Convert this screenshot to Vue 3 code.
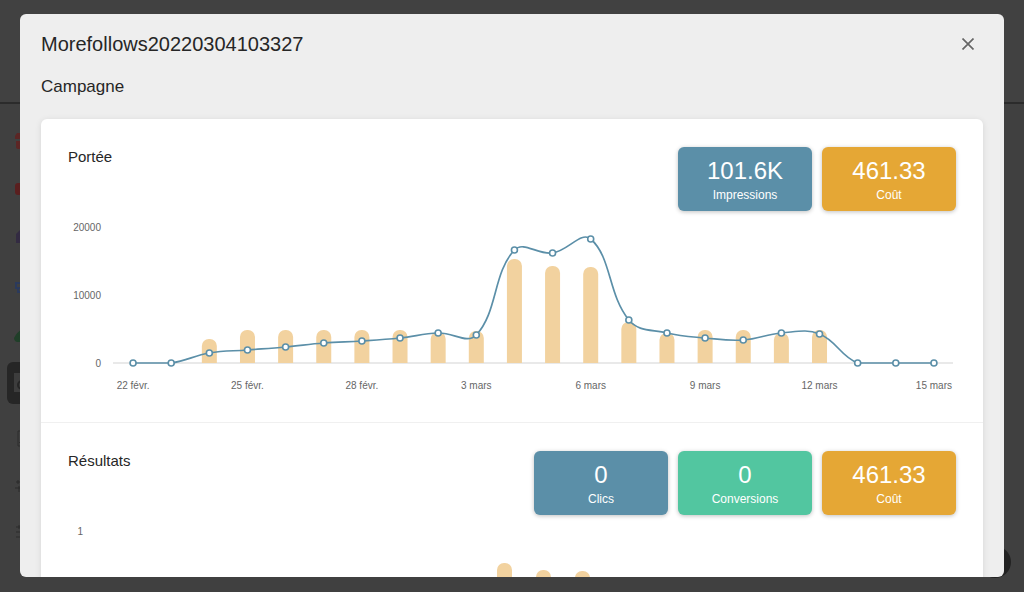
<script setup>
const BASELINE = 152
const TENSION = 0.4
const RIGHT = 885

const bars = [0, 0, 24, 33, 33, 33, 33, 33, 31, 32, 104, 97, 96, 41, 30, 33, 33, 30, 33, 0, 0, 0]
const impressions = [0, 0, 10, 13, 16, 20, 22, 25, 30, 28, 113, 110, 124, 43, 30, 25, 23, 30, 29, 0, 0, 0]
const dates = ['22 févr.', '25 févr.', '28 févr.', '3 mars', '6 mars', '9 mars', '12 mars', '15 mars']

function slots(left) {
  const step = (RIGHT - left) / bars.length
  return bars.map((_, i) => left + step * (i + 0.5))
}

function barPath(x, h) {
  const r = Math.min(7, h)
  return `M${x - 7.5} ${BASELINE}v${-(h - r)}a${r} ${r} 0 0 1 ${r} ${-r}h${15 - 2 * r}a${r} ${r} 0 0 1 ${r} ${r}v${h - r}z`
}

function makeBars(left) {
  const xs = slots(left)
  return bars.map((h, i) => ({ i, h, d: barPath(xs[i], h) })).filter((b) => b.h > 0)
}

function smooth(points) {
  const cap = (y) => Math.min(y, BASELINE)
  const ctrl = points.map((p, i) => {
    const a = points[i - 1] || p
    const b = points[i + 1] || p
    const da = Math.hypot(p.x - a.x, p.y - a.y)
    const db = Math.hypot(b.x - p.x, b.y - p.y)
    const fa = (TENSION * da) / (da + db)
    const fb = (TENSION * db) / (da + db)
    return {
      px: p.x - fa * (b.x - a.x),
      py: cap(p.y - fa * (b.y - a.y)),
      nx: p.x + fb * (b.x - a.x),
      ny: cap(p.y + fb * (b.y - a.y)),
    }
  })
  return points.reduce((d, p, i) => {
    if (i === 0) return `M${p.x} ${p.y}`
    const c = ctrl[i - 1]
    return `${d}C${c.nx} ${c.ny} ${ctrl[i].px} ${ctrl[i].py} ${p.x} ${p.y}`
  }, '')
}

const reachPoints = slots(46).map((x, i) => ({ x, y: BASELINE - impressions[i] }))

const sections = [
  {
    title: 'Portée',
    stats: [
      { value: '101.6K', label: 'Impressions', tone: 'blue' },
      { value: '461.33', label: 'Coût', tone: 'amber' },
    ],
    left: 46,
    tickX: 33,
    ticks: [{ text: '20000', y: 16 }, { text: '10000', y: 84 }, { text: '0', y: 152 }],
    bars: makeBars(46),
    points: reachPoints,
    line: smooth(reachPoints),
    dates: dates.map((text, i) => ({ text, x: reachPoints[i * 3].x })),
  },
  {
    title: 'Résultats',
    stats: [
      { value: '0', label: 'Clics', tone: 'blue' },
      { value: '0', label: 'Conversions', tone: 'green' },
      { value: '461.33', label: 'Coût', tone: 'amber' },
    ],
    left: 27,
    tickX: 15,
    ticks: [{ text: '1', y: 16 }],
    bars: makeBars(27),
    points: [],
    line: '',
    dates: [],
  },
]
</script>

<template>
  <div class="screen">
    <div class="topbar"></div>
    <svg class="rail" width="40" height="592" viewBox="0 0 40 592" aria-hidden="true">
      <path d="M17 133h10v6H15v-3zM16 141h11v8H18q-2 0-2-2z" fill="#5c2625" />
      <rect x="15" y="183" width="18" height="12" rx="3" fill="#5a1f1f" />
      <path d="M16 243v-9l6-6 6 6v9z" fill="#332b42" />
      <path d="M22 283h-6v5h6M18 288v4h6" fill="none" stroke="#2b3a5c" stroke-width="2" />
      <path d="M14 338q3-6 8-9v13h-5q-3-1-3-4z" fill="#203f29" />
      <rect x="7" y="362" width="40" height="42" rx="6" fill="#262626" />
      <rect x="14" y="373" width="20" height="19" fill="#3d3d3d" />
      <circle cx="22" cy="385" r="4" fill="none" stroke="#262626" stroke-width="2" />
      <path d="M26 431h-8v15h8M19 443l4-4" fill="none" stroke="#2d2d2d" stroke-width="1" />
      <path d="M16 482h8M15 488h9M18 480v4M19 486v6" fill="none" stroke="#2a2a2a" stroke-width="1" />
      <path d="M16 527h8M16 532h8M16 537h8M19 525v4" fill="none" stroke="#2a2a2a" stroke-width="1" />
    </svg>
    <div class="fab"></div>

    <div class="modal" role="dialog" aria-modal="true" aria-labelledby="dialog-title">
      <header class="modal-head">
        <h1 id="dialog-title">Morefollows20220304103327</h1>
        <button class="close" type="button" aria-label="Fermer">
          <svg width="12" height="12" viewBox="0 0 12 12">
            <path d="M0.5 0.5l11 11M11.5 0.5l-11 11" fill="none" stroke="#666" stroke-width="1.7" />
          </svg>
        </button>
      </header>
      <h2>Campagne</h2>

      <div class="card">
        <section v-for="s in sections" :key="s.title" class="panel">
          <div class="panel-head">
            <h3>{{ s.title }}</h3>
            <div class="stats">
              <div v-for="stat in s.stats" :key="stat.label" class="stat" :class="stat.tone">
                <span class="value">{{ stat.value }}</span>
                <span class="label">{{ stat.label }}</span>
              </div>
            </div>
          </div>
          <svg class="chart" viewBox="0 0 888 211" role="img" :aria-label="s.title">
            <path :d="`M${s.left - 1} 152H885`" stroke="#e2e2e2" stroke-width="1.5" />
            <path v-for="b in s.bars" :key="b.i" :d="b.d" fill="#f2d29f" />
            <path v-if="s.line" :d="s.line" fill="none" stroke="#5b8fa8" stroke-width="1.7" />
            <circle
              v-for="(p, i) in s.points"
              :key="i"
              :cx="p.x"
              :cy="p.y"
              r="3"
              fill="#fff"
              stroke="#5b8fa8"
              stroke-width="1.6"
            />
            <text v-for="t in s.ticks" :key="t.text" :x="s.tickX" :y="t.y + 4" text-anchor="end">{{ t.text }}</text>
            <text v-for="d in s.dates" :key="d.text" :x="d.x" y="178" text-anchor="middle">{{ d.text }}</text>
          </svg>
        </section>
      </div>
    </div>
  </div>
</template>

<style>
body {
  background: #404040;
}
</style>

<style scoped>
.screen {
  position: relative;
  display: flex;
  box-sizing: border-box;
  height: 100vh;
  padding: 14px 20px 15px;
  overflow: hidden;
  background: #404040;
  color: #262626;
  font-family: "Liberation Sans", Arial, sans-serif;
}

.topbar {
  position: absolute;
  top: 0;
  left: 0;
  right: 0;
  height: 102px;
  background: #414141;
  border-bottom: 2px solid #2b2b2b;
}

.rail {
  position: absolute;
  top: 0;
  left: 0;
}

.fab {
  position: absolute;
  right: 13px;
  bottom: 14px;
  width: 32px;
  height: 32px;
  border-radius: 50%;
  background: #222;
}

.modal {
  position: relative;
  flex: 1;
  display: flex;
  flex-direction: column;
  padding: 0 21px;
  overflow: hidden;
  border-radius: 6px;
  background: #eee;
}

h1,
h2,
h3 {
  margin: 0;
  font-weight: 400;
}

.modal-head {
  display: flex;
  align-items: center;
  justify-content: space-between;
  height: 59px;
  flex: none;
}

h1 {
  font-size: 20px;
  line-height: 24px;
}

.close {
  display: flex;
  padding: 9px;
  border: 0;
  background: none;
  cursor: pointer;
}

h2 {
  flex: none;
  padding: 4px 0 22px;
  font-size: 17px;
  line-height: 20px;
}

.card {
  flex: none;
  border-radius: 6px;
  background: #fff;
  box-shadow: 0 1px 6px rgba(0, 0, 0, 0.1);
}

.panel {
  padding: 28px 27px 0;
  border-bottom: 1px solid #f0f0f0;
}

.panel-head {
  display: flex;
  justify-content: space-between;
}

h3 {
  font-size: 15px;
  line-height: 20px;
}

.stats {
  display: flex;
  gap: 10px;
}

.stat {
  display: flex;
  flex-direction: column;
  align-items: center;
  box-sizing: border-box;
  width: 134px;
  height: 64px;
  padding-top: 10px;
  border-radius: 6px;
  box-shadow: 0 1px 4px rgba(0, 0, 0, 0.25);
  color: #fff;
}

.blue {
  background: #5b8fa8;
}

.green {
  background: #52c6a0;
}

.amber {
  background: #e5a735;
}

.value {
  font-size: 24px;
  line-height: 28px;
}

.label {
  font-size: 12px;
  line-height: 20px;
}

.chart {
  display: block;
  width: 100%;
}

.chart text {
  font-size: 10px;
  fill: #666;
}
</style>
